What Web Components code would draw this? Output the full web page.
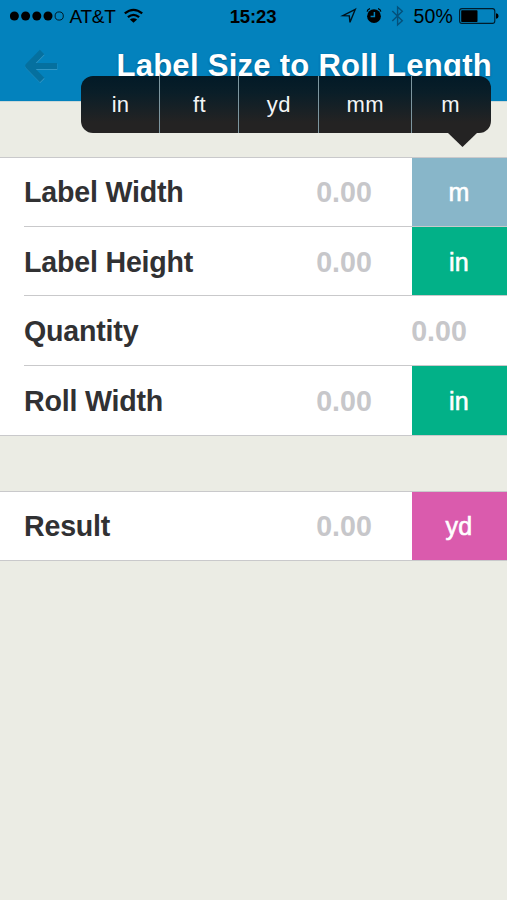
<!DOCTYPE html>
<html lang="en">
<head>
<meta charset="utf-8">
<title>Label Size to Roll Length</title>
<style>
html,body{margin:0;height:100%;background:#ebece4;overflow:hidden}
body{font-family:"Liberation Sans",Arial,sans-serif}
</style>
</head>
<body>
<converter-app></converter-app>
<script>
const define = (name, html) => customElements.define(name, class extends HTMLElement {
  constructor() {
    super();
    this.attachShadow({mode: 'open'}).innerHTML = html;
  }
});

define('signal-dots', `<style>:host{display:block;width:56px;height:32px}svg{display:block}</style>
<svg width="56" height="32" viewBox="10 0 56 32"><g><circle cx="14.4" cy="16" r="4.5"/><circle cx="25.6" cy="16" r="4.5"/><circle cx="36.8" cy="16" r="4.5"/><circle cx="48" cy="16" r="4.5"/></g><circle cx="59.2" cy="16" r="4.1" fill="none" stroke="#000" stroke-width=".8"/></svg>`);

define('wifi-icon', `<style>:host{display:block;width:22px;height:32px}svg{display:block}</style>
<svg width="22" height="32" viewBox="122 0 22 32" fill="none" stroke="#000" stroke-width="2.3"><path d="M124.8 13.4Q133.5 6.4 142.2 13.4M127.9 17.1Q133.5 12.6 139.1 17.1"/><path d="M133.5 22.8L129.9 19.4Q133.5 16.9 137.1 19.4Z" fill="#000" stroke="none"/></svg>`);

define('location-icon', `<style>:host{display:block;width:18px;height:32px}svg{display:block}</style>
<svg width="18" height="32" viewBox="340 0 18 32" fill="none" stroke="#00121c" stroke-width="1.4" stroke-linejoin="miter"><path d="M355.3 9.3L342.8 15.6L349.3 15.9L350 22.3Z"/></svg>`);

define('alarm-icon', `<style>:host{display:block;width:18px;height:32px}svg{display:block}</style>
<svg width="18" height="32" viewBox="365 0 18 32"><circle cx="374" cy="16.2" r="6.9"/><path d="M374.4 12V16.4H370.6" stroke="#0382bd" stroke-width="1.5" fill="none"/><path d="M367.1 11.6Q367.5 9.2 370 8.7M378 8.7Q380.5 9.2 380.9 11.6" stroke="#000" stroke-width="1.2" fill="none"/></svg>`);

define('bluetooth-icon', `<style>:host{display:block;width:14px;height:32px}svg{display:block}</style>
<svg width="14" height="32" viewBox="391 0 14 32" fill="none" stroke="#04507a" stroke-width="1.4"><path d="M392.3 11.1L402.3 20.7L397.6 25V7L402.3 11.3L392.3 20.9"/></svg>`);

define('battery-icon', `<style>:host{display:block;width:40px;height:32px}svg{display:block}</style>
<svg width="40" height="32" viewBox="459 0 40 32"><rect x="459.6" y="8.6" width="35.2" height="14.8" rx="2.4" fill="none" stroke="#001c2b" stroke-width="1.1"/><rect x="461.2" y="10.2" width="16.3" height="11.8" rx=".7"/><path d="M496 13.2Q498.6 13.5 498.6 16T496 18.8Z"/></svg>`);

define('status-bar', `<style>
:host{display:grid;grid-template-columns:1fr auto 1fr;height:32px;color:#000;font-size:19px;line-height:33px}
div{display:flex}
.l{padding-left:10px}
.carrier{width:46px;margin:0 6px 0 3.5px;letter-spacing:-.25px}
.time{font-weight:700;font-size:18.5px;letter-spacing:-.15px;margin-right:1px}
.r{justify-content:flex-end;padding-right:8px}
.pct{width:40px;margin:0 5.5px 0 8.5px;font-size:19.5px;letter-spacing:.1px}
location-icon{margin-right:7px}alarm-icon{margin-right:8px}
</style>
<div class="l"><signal-dots></signal-dots><span class="carrier">AT&amp;T</span><wifi-icon></wifi-icon></div>
<div class="time">15:23</div>
<div class="r"><location-icon></location-icon><alarm-icon></alarm-icon><bluetooth-icon></bluetooth-icon><span class="pct">50%</span><battery-icon></battery-icon></div>`);

define('back-arrow', `<style>:host{display:block;flex:none;width:36px;height:36px}svg{display:block}</style>
<svg width="36" height="36" viewBox="24 47 36 36" fill="none" stroke-width="6.2" stroke-linejoin="round"><path d="M57 65H31M42.1 51L28.4 65L42.1 79" stroke="#3297c6" transform="translate(.3 .9)"/><path d="M57 65H31M42.1 51L28.4 65L42.1 79" stroke="#05709f"/></svg>`);

define('nav-bar', `<style>
:host{display:flex;align-items:center;justify-content:space-between;height:69px;padding:0 15px 0 24px;box-sizing:border-box}
h1{margin:0 0 2px;color:#fff;font-size:31px;line-height:65px;font-weight:700;white-space:nowrap;text-shadow:0 1px 2px #003b5c99;letter-spacing:.28px}
back-arrow{margin-bottom:2px}
</style><back-arrow></back-arrow><h1><slot></slot></h1>`);

define('menu-item', `<style>
:host{display:block;box-sizing:border-box;text-align:center;color:#f3f5f6;font-size:22px;line-height:57px;border-right:1px solid #7d969f;letter-spacing:.3px;padding-left:1px}
:host(:last-child){border-right:0;padding:0 2px 0 0}
</style><slot></slot>`);

define('unit-menu', `<style>
:host{display:block;position:absolute;left:81px;top:76px;width:410px;height:71px;z-index:2}
.body{display:grid;grid-template-columns:79px 79px 79.5px 93.5px 79px;height:57px;border-radius:12px;overflow:hidden;background:linear-gradient(#021a27,#0a1e28 30%,#242323 82%)}
svg{display:block;margin-left:367px}
</style><div class="body"><slot></slot></div><svg width="30" height="14"><path d="M0 0H29L14.5 14Z" fill="#242323"/></svg>`);

define('unit-button', `<style>
:host{display:block;width:95px;height:100%;box-sizing:border-box;padding-right:1px;background:var(--unit,#02b188);color:#fff;text-align:center;font-size:25px;line-height:var(--line,68px);-webkit-text-stroke:.6px #fff;letter-spacing:.3px}
</style><slot></slot>`);

define('field-row', `<style>
:host{--line:70px;display:flex;height:var(--h,69px);box-sizing:border-box;background:#fff;font-weight:700;font-size:28.6px;line-height:71px;padding-left:24px}
.in{flex:1;display:flex;border-top:1px solid #c9c9cb}
.label{flex:1;color:#313133;letter-spacing:-.2px}
.value{color:#c7c7ca;padding-right:40px;letter-spacing:.05px}
::slotted(unit-button){font-weight:400}
:host(:first-child){--line:68px;padding-left:0;line-height:69px}
:host(:first-child) .label{padding-left:24px}
</style><div class="in"><span class="label"><slot name="label"></slot></span><span class="value"><slot name="value"></slot></span><slot></slot></div>`);

define('field-group', `<style>:host{display:block;border-bottom:1px solid #c9c9cb;background:#fff}</style><slot></slot>`);

define('converter-app', `<style>
:host{display:block;position:relative;width:507px;height:900px;overflow:hidden;background:#ebece4}
header{height:101px;background:#0382bd;border-bottom:1px solid #cbd8d8}
main{display:flex;flex-direction:column;gap:55px;padding-top:55px}
</style>
<header><status-bar></status-bar><nav-bar>Label Size to Roll Length</nav-bar></header>
<unit-menu><menu-item>in</menu-item><menu-item>ft</menu-item><menu-item>yd</menu-item><menu-item>mm</menu-item><menu-item>m</menu-item></unit-menu>
<main>
<field-group>
<field-row><span slot="label">Label Width</span><span slot="value">0.00</span><unit-button style="--unit:#88b6c9">m</unit-button></field-row>
<field-row><span slot="label">Label Height</span><span slot="value">0.00</span><unit-button>in</unit-button></field-row>
<field-row style="--h:70px"><span slot="label">Quantity</span><span slot="value">0.00</span></field-row>
<field-row style="--h:70px"><span slot="label">Roll Width</span><span slot="value">0.00</span><unit-button>in</unit-button></field-row>
</field-group>
<field-group><field-row><span slot="label">Result</span><span slot="value">0.00</span><unit-button style="--unit:#da5bad">yd</unit-button></field-row></field-group>
</main>`);
</script>
</body>
</html>
